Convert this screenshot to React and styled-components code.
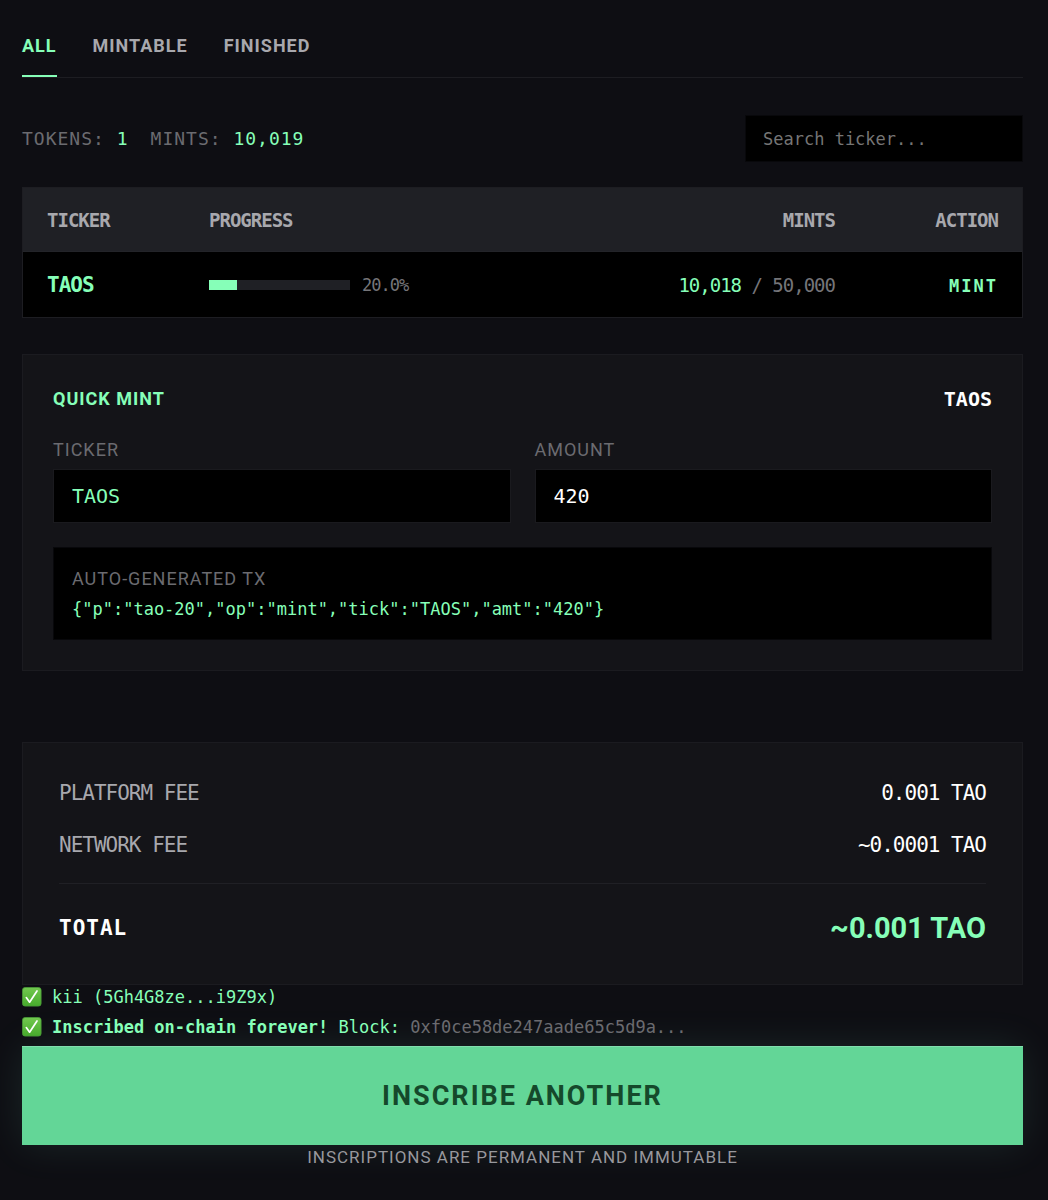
import React, { useState } from 'react';
import styled, { createGlobalStyle } from 'styled-components';

const sans = `Roboto, 'Liberation Sans', sans-serif`;
const mono = `'DejaVu Sans Mono', 'Liberation Mono', monospace`;

const GlobalStyle = createGlobalStyle`
  * {
    box-sizing: border-box;
  }

  body {
    margin: 0;
    background: #0e0e13;
    color: #ffffff;
    font-family: ${mono};
    font-size: 17px;
    line-height: 24px;
  }
`;

const Page = styled.main`
  padding: 34px 25px 24px 22px;
`;

const Tabs = styled.nav`
  display: flex;
  gap: 36px;
  border-bottom: 1px solid #1d1d22;
`;

const Tab = styled.button`
  padding: 0 0 17px;
  border: none;
  border-bottom: 2px solid ${(props) => (props.$active ? '#86ffb8' : 'transparent')};
  background: none;
  color: ${(props) => (props.$active ? '#86ffb8' : '#a8a8ad')};
  font-family: ${sans};
  font-size: 18px;
  font-weight: 700;
  line-height: 24px;
  letter-spacing: 1px;
  text-transform: uppercase;
  cursor: pointer;
`;

const Toolbar = styled.div`
  display: flex;
  align-items: center;
  justify-content: space-between;
  margin: 37px 0 25px;
`;

const Stats = styled.div`
  display: flex;
  gap: 22px;
  color: #6b6b70;
  font-size: 18px;
  letter-spacing: 1px;

  span {
    color: #86ffb8;
  }
`;

const Input = styled.input`
  width: 100%;
  height: 54px;
  padding: 0 18px;
  border: 1px solid #1a1a1e;
  border-radius: 0;
  background: #000000;
  color: ${(props) => (props.$accent ? '#86ffb8' : '#ffffff')};
  font-family: ${mono};
  font-size: 20px;
  outline: none;
`;

const SearchInput = styled(Input)`
  width: 278px;
  height: 47px;
  padding: 0 17px;
  border-color: #08080b;
  font-size: 17px;

  &::placeholder {
    color: #757575;
    opacity: 1;
  }
`;

const TokenTable = styled.table`
  width: 100%;
  table-layout: fixed;
  border-collapse: separate;
  border-spacing: 0;
  border: 1px solid #1d1d22;
  background: #000000;
  font-size: 19px;
  letter-spacing: -1px;
`;

const HeadCell = styled.th`
  width: ${(props) => props.$width || 'auto'};
  height: 64px;
  padding: 0 24px;
  background: #1f2025;
  border-bottom: 1px solid #232429;
  color: #a8a8ad;
  text-align: ${(props) => (props.$right ? 'right' : 'left')};
  font-weight: 700;
`;

const Cell = styled.td`
  height: 65px;
  padding: 0 24px;
  color: #757579;
  text-align: ${(props) => (props.$right ? 'right' : 'left')};
`;

const TickerName = styled.strong`
  color: #86ffb8;
  font-size: 21px;
`;

const Progress = styled.div`
  display: flex;
  align-items: center;
  gap: 12px;
  font-size: 17px;
`;

const Track = styled.div`
  width: 141px;
  height: 10px;
  background: #1f2025;
`;

const Fill = styled.div`
  height: 100%;
  background: #86ffb8;
`;

const Minted = styled.span`
  color: #86ffb8;
`;

const MintButton = styled.button`
  padding: 0;
  border: none;
  background: none;
  color: #86ffb8;
  font-family: ${mono};
  font-size: 17px;
  font-weight: 700;
  letter-spacing: 2px;
  cursor: pointer;
`;

const Card = styled.section`
  padding: ${(props) => props.$padding};
  border: 1px solid #1b1b20;
  background: #141418;
`;

const MintCard = styled(Card)`
  margin: 36px 0 71px;
`;

const CardHeader = styled.div`
  display: flex;
  align-items: center;
  justify-content: space-between;
  margin-bottom: 27px;
  font-size: 20px;
  line-height: 28px;
`;

const CardTitle = styled.h2`
  margin: 0;
  color: #86ffb8;
  font-family: ${sans};
  font-size: 18px;
  font-weight: 700;
  letter-spacing: 1px;
`;

const Fields = styled.div`
  display: grid;
  grid-template-columns: 1fr 1fr;
  gap: 24px;
`;

const Caption = styled.span`
  display: block;
  color: #6b6b70;
  font-family: ${sans};
  font-size: 18px;
  line-height: 20px;
  letter-spacing: 1px;
`;

const FieldLabel = styled(Caption).attrs({ as: 'label' })`
  margin-bottom: 9px;
`;

const TxBox = styled.div`
  margin-top: 24px;
  padding: 21px 18px 18px;
  border: 1px solid #08080b;
  background: #000000;
`;

const TxCode = styled.code`
  display: block;
  margin-top: 8px;
  color: #86ffb8;
  font-family: ${mono};
  font-size: 17px;
  line-height: 24px;
`;

const FeeRow = styled.div`
  display: flex;
  align-items: center;
  justify-content: space-between;
  margin-bottom: 24px;
  color: #a8a8ad;
  font-size: 21px;
  line-height: 28px;
  letter-spacing: -1px;

  span:last-child {
    color: #ffffff;
  }
`;

const TotalRow = styled.div`
  display: flex;
  align-items: center;
  justify-content: space-between;
  padding-top: 24px;
  border-top: 1px solid #202025;
  font-size: 21px;
  font-weight: 700;
  line-height: 40px;
  letter-spacing: 1px;
`;

const TotalValue = styled.span`
  color: #86ffb8;
  font-family: ${sans};
  font-size: 29px;
  letter-spacing: 0;
`;

const StatusList = styled.div`
  display: flex;
  flex-direction: column;
  gap: 6px;
  padding-bottom: 7px;
  color: #86ffb8;
`;

const StatusLine = styled.div`
  display: flex;
  align-items: center;
  gap: 10px;
`;

const Muted = styled.span`
  color: #6b6b70;
`;

const InscribeButton = styled.button`
  display: block;
  width: 100%;
  height: 99px;
  border: none;
  background: #63d697;
  box-shadow: 0 0 40px rgba(134, 255, 220, 0.1), inset 0 1px 0 #82dfae;
  color: #15492b;
  font-family: ${sans};
  font-size: 27px;
  font-weight: 700;
  letter-spacing: 2px;
  cursor: pointer;
`;

const Footnote = styled.p`
  margin: 0;
  color: #98989d;
  font-family: ${sans};
  font-size: 17px;
  letter-spacing: 1px;
  text-align: center;
`;

function CheckIcon() {
  return (
    <svg width="20" height="20" viewBox="0 0 20 20" aria-hidden="true">
      <defs>
        <linearGradient id="check-bg" x1="0" y1="0" x2="0" y2="1">
          <stop offset="0" stopColor="#72c84f" />
          <stop offset="1" stopColor="#47ab2c" />
        </linearGradient>
      </defs>
      <rect x="0.5" y="0.5" width="18.6" height="18.6" rx="2.6" fill="url(#check-bg)" stroke="#4a9a38" strokeWidth="0.8" />
      <path d="M4.3 10.6 7.6 15.2 15 4" fill="none" stroke="#ffffff" strokeWidth="1.7" strokeLinecap="round" strokeLinejoin="round" />
    </svg>
  );
}

const tabs = ['All', 'Mintable', 'Finished'];

const tokens = [{ tick: 'TAOS', minted: 10018, supply: 50000 }];

function App() {
  const [activeTab, setActiveTab] = useState('All');
  const [search, setSearch] = useState('');
  const [ticker, setTicker] = useState('TAOS');
  const [amount, setAmount] = useState('420');

  const tx = JSON.stringify({ p: 'tao-20', op: 'mint', tick: ticker, amt: amount });
  const visible = tokens.filter((token) => {
    const done = token.minted >= token.supply;
    if (activeTab === 'Mintable' && done) return false;
    if (activeTab === 'Finished' && !done) return false;
    return token.tick.includes(search.toUpperCase());
  });

  return (
    <>
      <GlobalStyle />
      <Page>
        <Tabs>
          {tabs.map((tab) => (
            <Tab key={tab} $active={tab === activeTab} onClick={() => setActiveTab(tab)}>
              {tab}
            </Tab>
          ))}
        </Tabs>

        <Toolbar>
          <Stats>
            <div>TOKENS: <span>1</span></div>
            <div>MINTS: <span>10,019</span></div>
          </Stats>
          <SearchInput
            type="text"
            aria-label="Search ticker"
            placeholder="Search ticker..."
            value={search}
            onChange={(e) => setSearch(e.target.value)}
          />
        </Toolbar>

        <TokenTable>
          <thead>
            <tr>
              <HeadCell $width="162px">TICKER</HeadCell>
              <HeadCell>PROGRESS</HeadCell>
              <HeadCell $right>MINTS</HeadCell>
              <HeadCell $right $width="163px">ACTION</HeadCell>
            </tr>
          </thead>
          <tbody>
            {visible.map((token) => {
              const percent = (token.minted / token.supply) * 100;
              return (
                <tr key={token.tick}>
                  <Cell><TickerName>{token.tick}</TickerName></Cell>
                  <Cell>
                    <Progress>
                      <Track>
                        <Fill style={{ width: `${percent}%` }} />
                      </Track>
                      <span>{percent.toFixed(1)}%</span>
                    </Progress>
                  </Cell>
                  <Cell $right>
                    <Minted>{token.minted.toLocaleString('en-US')}</Minted> / {token.supply.toLocaleString('en-US')}
                  </Cell>
                  <Cell $right>
                    <MintButton onClick={() => setTicker(token.tick)}>MINT</MintButton>
                  </Cell>
                </tr>
              );
            })}
          </tbody>
        </TokenTable>

        <MintCard $padding="30px">
          <CardHeader>
            <CardTitle>QUICK MINT</CardTitle>
            <strong>{ticker}</strong>
          </CardHeader>
          <Fields>
            <div>
              <FieldLabel htmlFor="ticker">TICKER</FieldLabel>
              <Input id="ticker" type="text" $accent value={ticker} onChange={(e) => setTicker(e.target.value)} />
            </div>
            <div>
              <FieldLabel htmlFor="amount">AMOUNT</FieldLabel>
              <Input id="amount" type="text" value={amount} onChange={(e) => setAmount(e.target.value)} />
            </div>
          </Fields>
          <TxBox>
            <Caption>AUTO-GENERATED TX</Caption>
            <TxCode>{tx}</TxCode>
          </TxBox>
        </MintCard>

        <Card $padding="36px">
          <FeeRow>
            <span>PLATFORM FEE</span>
            <span>0.001 TAO</span>
          </FeeRow>
          <FeeRow>
            <span>NETWORK FEE</span>
            <span>~0.0001 TAO</span>
          </FeeRow>
          <TotalRow>
            <span>TOTAL</span>
            <TotalValue>~0.001 TAO</TotalValue>
          </TotalRow>
        </Card>

        <StatusList>
          <StatusLine>
            <CheckIcon />
            <span>kii (5Gh4G8ze...i9Z9x)</span>
          </StatusLine>
          <StatusLine>
            <CheckIcon />
            <span>
              <strong>Inscribed on-chain forever!</strong> Block: <Muted>0xf0ce58de247aade65c5d9a...</Muted>
            </span>
          </StatusLine>
        </StatusList>

        <InscribeButton>INSCRIBE ANOTHER</InscribeButton>
        <Footnote>INSCRIPTIONS ARE PERMANENT AND IMMUTABLE</Footnote>
      </Page>
    </>
  );
}

export default App;
